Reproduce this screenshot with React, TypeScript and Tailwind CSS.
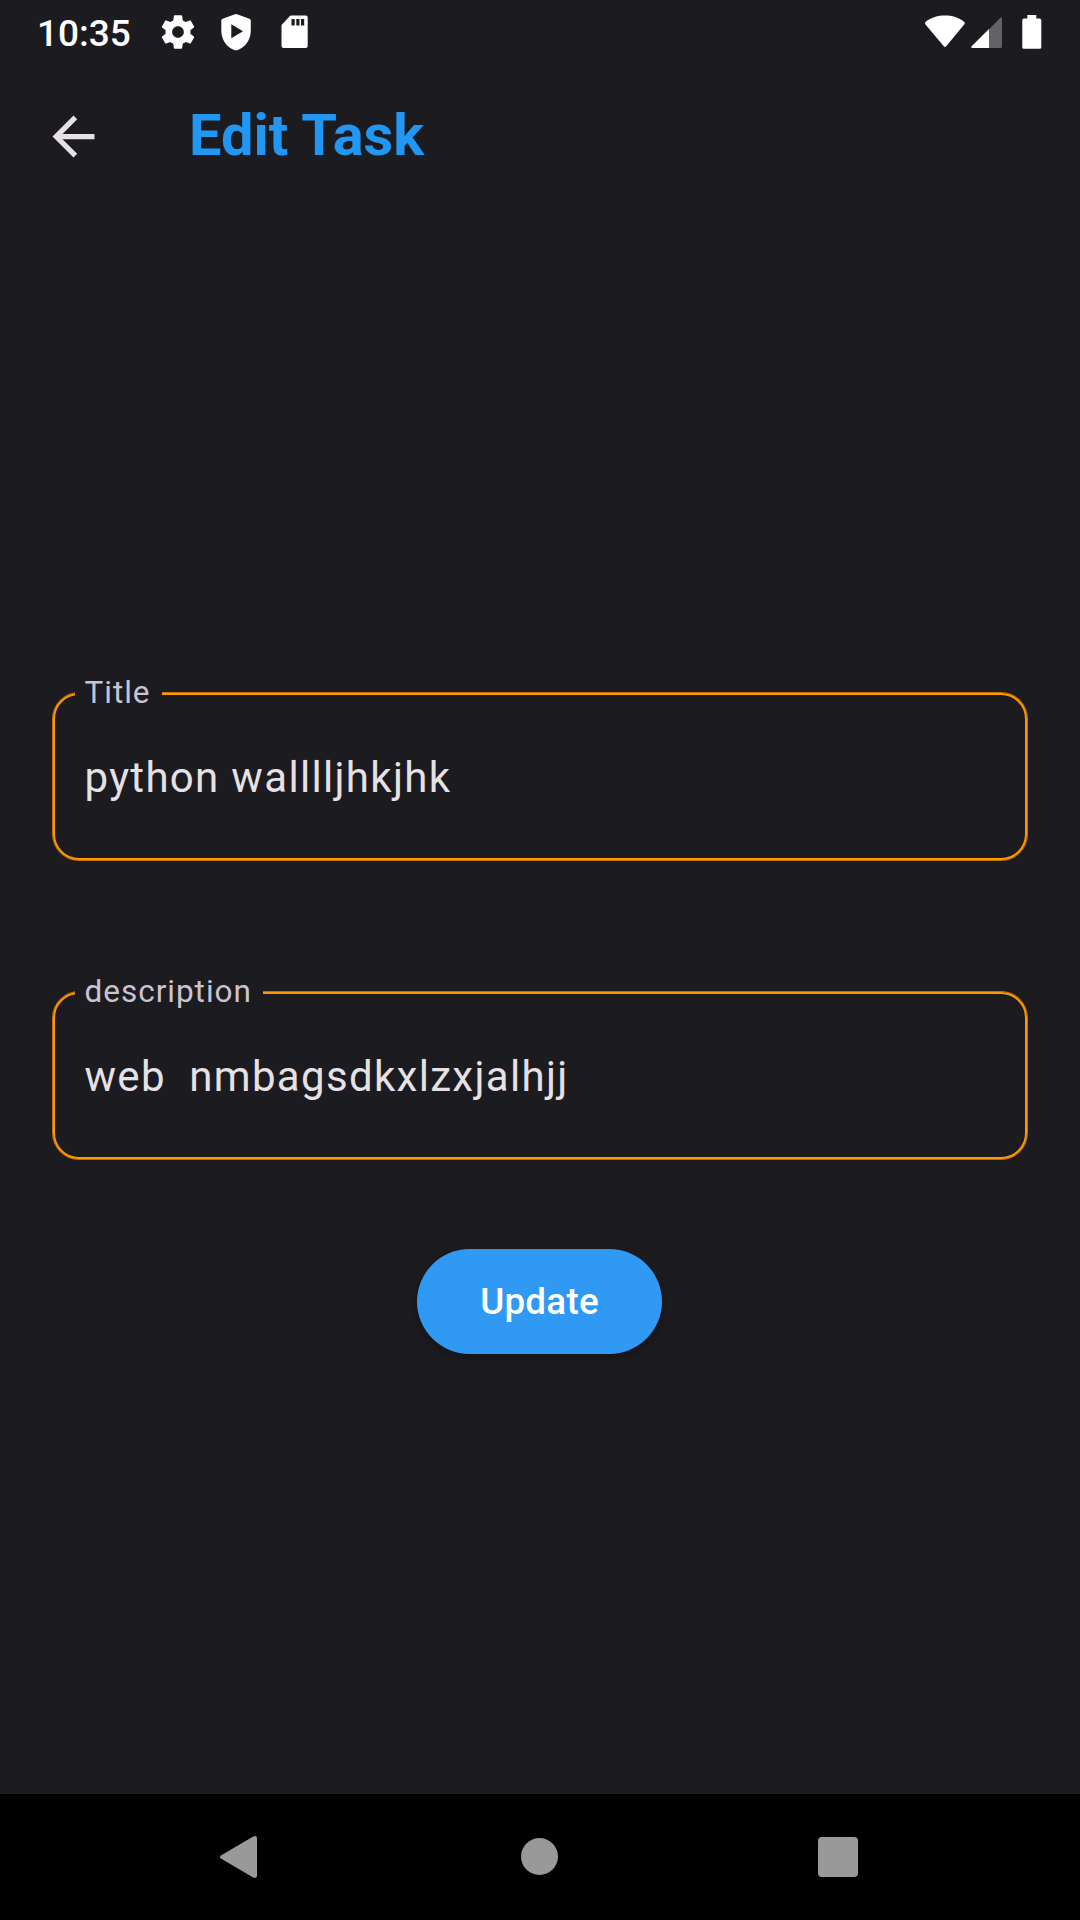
import React from "react";

function StatusBar() {
  return (
    <div className="flex h-[63px] items-center justify-between pl-[37px] pr-[38px] text-white">
      <div className="flex items-center">
        <span className="w-[121px] pt-[3px] text-[37px] leading-[43px] font-medium">10:35</span>
        <svg className="h-[40px] w-[40px]" viewBox="0 0 24 24" fill="currentColor">
          <path d="M19.43 12.98c.04-.32.07-.64.07-.98s-.03-.66-.07-.98l2.11-1.65c.19-.15.24-.42.12-.64l-2-3.46c-.12-.22-.39-.3-.61-.22l-2.49 1c-.52-.4-1.08-.73-1.69-.98l-.38-2.65C14.46 2.18 14.25 2 14 2h-4c-.25 0-.46.18-.49.42l-.38 2.65c-.61.25-1.17.59-1.69.98l-2.49-1c-.23-.09-.49 0-.61.22l-2 3.46c-.13.22-.07.49.12.64l2.11 1.65c-.04.32-.07.65-.07.98s.03.66.07.98l-2.11 1.65c-.19.15-.24.42-.12.64l2 3.46c.12.22.39.3.61.22l2.49-1c.52.4 1.08.73 1.69.98l.38 2.65c.03.24.24.42.49.42h4c.25 0 .46-.18.49-.42l.38-2.65c.61-.25 1.17-.59 1.69-.98l2.49 1c.23.09.49 0 .61-.22l2-3.46c.12-.22.07-.49-.12-.64l-2.11-1.65zM12 15.5c-1.93 0-3.5-1.57-3.5-3.500s1.570-3.500 3.500-3.500 3.500 1.570 3.500 3.500-1.570 3.500-3.500 3.500z" />
        </svg>
        <svg className="ml-[23px] h-[38px] w-[30px]" viewBox="0 0 30 38" fill="currentColor">
          <path fillRule="evenodd" d="M14 1.2Q15 .8 16 1.2L28.5 5.8Q29.8 6.3 29.8 7.7V17C29.8 27 24.5 34.5 16 37.2Q15 37.5 14 37.2C5.500 34.500 .3 27 .3 17V7.700Q.3 6.300 1.600 5.800ZM10.300 11.300V25.200L22 18.250Z" />
        </svg>
        <svg className="ml-[29.5px] h-[34px] w-[27px]" viewBox="0 0 27 34" fill="currentColor">
          <path fillRule="evenodd" d="M10.200.5H24.800Q26.700.5 26.700 2.400V31.100Q26.700 33 24.800 33H2.400Q.5 33 .5 31.100V10.800Q.5 10.100 1 9.600L8.900 1.100Q9.400.5 10.200.5ZM10.500 4V10.500H13.700V4ZM15.300 4V10.500H18.500V4ZM20 4V10.500H23.200V4Z" />
        </svg>
      </div>
      <div className="flex items-center">
        <svg className="h-[34px] w-[42px]" viewBox="0 0 42 34" fill="currentColor">
          <path d="M1.300 9.200Q.3 8 1.500 7C7 2.500 14 .6 21 .6S35 2.500 40.200 7Q41.400 8 40.400 9.200L22.200 31.200Q21 32.600 19.800 31.200Z" />
        </svg>
        <svg className="ml-[5px] h-[34px] w-[32px]" viewBox="0 0 32 34" fill="currentColor">
          <path opacity=".31" d="M18 14.200L29.200 2.900Q31 1.300 31 3.600V31.500Q31 33 29.500 33H18Z" />
          <path d="M18 14V33H1.500Q-.5 32.700.6 31.300Z" />
        </svg>
        <svg className="ml-[19px] h-[34px] w-[20px]" viewBox="0 0 20 34" fill="currentColor">
          <path d="M5.300 0H14.300V3.500H17.700Q19.300 3.500 19.300 5.100V32.300Q19.300 33.800 17.700 33.800H1.800Q.3 33.800.3 32.300V5.100Q.3 3.500 1.800 3.500H5.300Z" />
        </svg>
      </div>
    </div>
  );
}

function AppBar() {
  return (
    <header className="flex h-[147px] items-center pl-[42px]">
      <button aria-label="Back" className="flex">
        <svg className="h-[63px] w-[63px]" viewBox="0 0 24 24" fill="#e6e1e5">
          <path d="M20 11H7.830l5.590-5.590L12 4l-8 8 8 8 1.410-1.410L7.830 13H20v-2z" />
        </svg>
      </button>
      <h1 className="ml-[84px] pb-[2px] text-[57.75px] leading-[73px] font-bold text-[#2196f3]">Edit Task</h1>
    </header>
  );
}

function Field({ label, value }: { label: string; value: string }) {
  return (
    <div className="relative mx-[53px] h-[167px] rounded-[26px] border-2 border-[#ff9800] shadow-[0_0_0_1px_rgba(255,152,0,0.7)]">
      <label className="absolute -top-[23px] left-[20px] bg-[#1c1b1f] pr-[11.5px] pl-[9.5px] text-[31.5px] leading-[42px] tracking-[0.98px] whitespace-nowrap text-[#cac4d0]">
        {label}
      </label>
      <div className="flex h-full items-center pt-[2px] pl-[29.5px] text-[42px] leading-[63px] tracking-[1.3125px] whitespace-pre text-[#e6e1e5]">
        {value}
      </div>
    </div>
  );
}

function NavigationBar() {
  return (
    <nav className="flex h-[126px] items-center bg-black text-[#999]">
      <svg className="ml-[219px] h-[44px] w-[39px]" viewBox="0 0 39 44" fill="currentColor">
        <path d="M2.300 23.800Q-.4 22 2.300 20.200L34.200 1.500Q38 0 38 3.500V40.500Q38 44 34.200 42.500Z" />
      </svg>
      <div className="mb-[2px] ml-[263px] h-[37px] w-[37px] rounded-full bg-[#999]" />
      <div className="ml-[260px] h-[40px] w-[40px] rounded-[4px] bg-[#999]" />
    </nav>
  );
}

export default function App() {
  return (
    <div className="flex h-[1920px] w-[1080px] flex-col overflow-hidden bg-[#1c1b1f] font-[Roboto,sans-serif]">
      <StatusBar />
      <AppBar />
      <main className="flex flex-1 flex-col pt-[483px]">
        <Field label="Title" value="python walllljhkjhk" />
        <div className="h-[132px]" />
        <Field label="description" value="web  nmbagsdkxlzxjalhjj" />
        <button className="mt-[90px] mr-px h-[105px] w-[245px] self-center rounded-full bg-[#3099f4] text-[36.75px] leading-[52px] font-medium tracking-[0.26px] text-white shadow-[0_4px_10px_rgba(0,0,0,0.3)]">
          Update
        </button>
      </main>
      <NavigationBar />
    </div>
  );
}
